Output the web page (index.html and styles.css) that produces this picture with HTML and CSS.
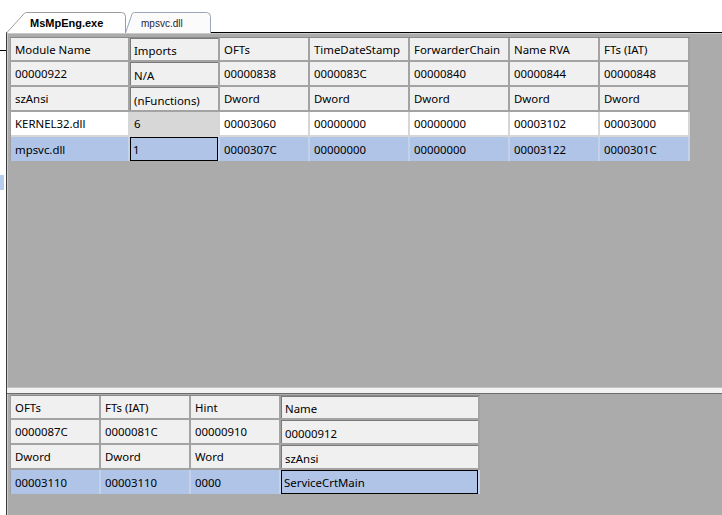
FILE: index.html
```html
<!DOCTYPE html>
<html lang="en">
<head>
    <meta charset="UTF-8">
    <title>MsMpEng.exe - Import Directory</title>
    <link rel="stylesheet" href="styles.css">
</head>
<body>
    <div class="tabs">
        <div class="tab tab-active">
            <svg class="tab-shape" width="120" height="21" viewBox="0 0 120 21">
                <path d="M0.5,21 L18.2,1.6 Q19,0.5 20.5,0.5 L115.5,0.5 Q119.5,0.5 119.5,4.5 L119.5,21" fill="#ffffff" stroke="#9c9c9c"/>
            </svg>
            <span class="tab-label">MsMpEng.exe</span>
        </div>
        <div class="tab tab-other">
            <svg class="tab-shape" width="86" height="21" viewBox="0 0 86 21">
                <path d="M0.5,21 L7.2,1.6 Q7.8,0.5 9.5,0.5 L81.5,0.5 Q85.5,0.5 85.5,4.5 L85.5,21" fill="#fbfbfb" stroke="#98a7bb"/>
            </svg>
            <span class="tab-label">mpsvc.dll</span>
        </div>
    </div>

    <div class="main">
        <div class="side">
            <div class="side-box">
                <div class="side-sel"></div>
            </div>
        </div>

        <div class="work">
            <div class="pane pane-top">
                <div class="grid grid-imports">
                    <div class="cell">Module Name</div>
                    <div class="cell key">Imports</div>
                    <div class="cell">OFTs</div>
                    <div class="cell">TimeDateStamp</div>
                    <div class="cell">ForwarderChain</div>
                    <div class="cell">Name RVA</div>
                    <div class="cell">FTs (IAT)</div>

                    <div class="cell">00000922</div>
                    <div class="cell key">N/A</div>
                    <div class="cell">00000838</div>
                    <div class="cell">0000083C</div>
                    <div class="cell">00000840</div>
                    <div class="cell">00000844</div>
                    <div class="cell">00000848</div>

                    <div class="cell">szAnsi</div>
                    <div class="cell key">(nFunctions)</div>
                    <div class="cell">Dword</div>
                    <div class="cell">Dword</div>
                    <div class="cell">Dword</div>
                    <div class="cell">Dword</div>
                    <div class="cell">Dword</div>

                    <div class="cell row-data">KERNEL32.dll</div>
                    <div class="cell row-data key-data">6</div>
                    <div class="cell row-data">00003060</div>
                    <div class="cell row-data">00000000</div>
                    <div class="cell row-data">00000000</div>
                    <div class="cell row-data">00003102</div>
                    <div class="cell row-data">00003000</div>

                    <div class="cell row-sel last">mpsvc.dll</div>
                    <div class="cell row-sel last focus">1</div>
                    <div class="cell row-sel last">0000307C</div>
                    <div class="cell row-sel last">00000000</div>
                    <div class="cell row-sel last">00000000</div>
                    <div class="cell row-sel last">00003122</div>
                    <div class="cell row-sel last">0000301C</div>
                </div>
            </div>

            <div class="splitter"></div>

            <div class="pane pane-bottom">
                <div class="grid grid-funcs">
                    <div class="cell">OFTs</div>
                    <div class="cell">FTs (IAT)</div>
                    <div class="cell">Hint</div>
                    <div class="cell key">Name</div>

                    <div class="cell">0000087C</div>
                    <div class="cell">0000081C</div>
                    <div class="cell">00000910</div>
                    <div class="cell key">00000912</div>

                    <div class="cell">Dword</div>
                    <div class="cell">Dword</div>
                    <div class="cell">Word</div>
                    <div class="cell key">szAnsi</div>

                    <div class="cell row-sel last">00003110</div>
                    <div class="cell row-sel last">00003110</div>
                    <div class="cell row-sel last">0000</div>
                    <div class="cell row-sel last focus">ServiceCrtMain</div>
                </div>
            </div>
        </div>
    </div>
</body>
</html>
```

FILE: styles.css
```css
body, html {
    margin: 0;
    padding: 0;
    height: 100%;
    overflow: hidden;
    background: #fff;
    font-family: 'Noto Sans', sans-serif;
    font-size: 11.4px;
    color: #000;
}

/* tab strip */
.tabs {
    height: 32px;
    display: flex;
    align-items: flex-end;
    padding-left: 6px;
}

.tab {
    position: relative;
    height: 21px;
    margin-bottom: -1px;
}

.tab-active {
    width: 120px;
    z-index: 2;
}

.tab-other {
    width: 86px;
    margin-left: -1px;
}

.tab-shape {
    position: absolute;
    top: 0;
    left: 0;
}

.tab-label {
    position: relative;
    display: block;
    font-family: 'Liberation Sans', sans-serif;
    line-height: 21px;
    padding-top: 1px;
}

.tab-active .tab-label {
    font-weight: bold;
    font-size: 11px;
    padding-left: 24px;
}

.tab-other .tab-label {
    font-size: 10px;
    padding-left: 16px;
    color: #1c2340;
}

/* main frame */
.main {
    display: flex;
    height: 483px;
}

.side {
    width: 6px;
    background: #fff;
}

.side-box {
    margin-top: 18px;
    border-top: 1px solid #000;
    padding-top: 124px;
}

.side-sel {
    width: 4px;
    height: 15px;
    background: #b7cdee;
}

.work {
    flex: 1;
    display: flex;
    flex-direction: column;
    border-top: 1px solid #000;
    border-left: 1px solid #3c3c3c;
    background: #ababab;
}

.pane {
    border-left: 1px solid #cdcdcd;
    padding-left: 2px;
}

.pane-top {
    height: 355px;
    padding-top: 4px;
    box-sizing: border-box;
    box-shadow: inset 0 1px 0 #c9c9c9;
}

.splitter {
    height: 5px;
    background: #f2f2f2;
    border-top: 1px solid #c4c4c4;
    border-bottom: 1px solid #6c6c6c;
    margin-top: -1px;
}

.pane-bottom {
    flex: 1;
    padding-top: 1px;
}

/* grids */
.grid {
    display: grid;
    grid-auto-rows: 25px;
    border-top: 1px solid #8a8a8a;
    border-left: 1px solid #a0a0a0;
    width: max-content;
}

.grid-imports {
    grid-template-columns: 119px 90px 90px 100px 100px 90px 90px;
    grid-template-rows: 24px 25px 25px 25px 24px;
}

.grid-funcs {
    grid-template-columns: 90px 90px 90px 199px;
    grid-template-rows: 24px 25px 25px 24px;
}

.cell {
    display: flex;
    align-items: center;
    padding-left: 4px;
    background: #f0f0f0;
    border-right: 2px solid #a3a3a3;
    border-bottom: 2px solid #a3a3a3;
    white-space: nowrap;
    overflow: hidden;
}

.cell.key {
    padding-top: 3px;
    box-shadow: inset 1px 1px 0 #7a7a7a;
}

.row-data {
    background: #fff;
    border-right-color: #d6d6d6;
    border-bottom-color: #d6d6d6;
}

.key-data {
    background: #d7d7d7;
}

.row-sel {
    background: #afc4e6;
    border-right-color: #c3d1e9;
}

.cell.last {
    border-bottom: none;
}

.cell.focus {
    box-shadow: inset 0 0 0 1px #000;
    padding-left: 3px;
}
```
